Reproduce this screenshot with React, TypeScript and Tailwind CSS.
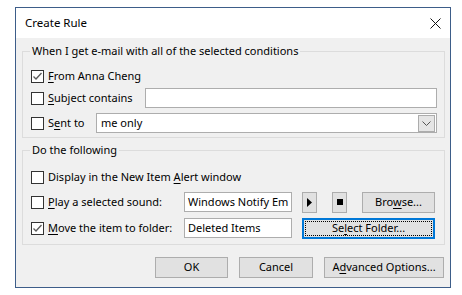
import React from 'react';

const font = { fontFamily: '"Noto Sans", "Open Sans", sans-serif' };

function U({ children }: { children: React.ReactNode }) {
  return <span className="underline decoration-1 underline-offset-[2px]">{children}</span>;
}

function Check({ checked }: { checked?: boolean }) {
  return (
    <span className="flex h-[13px] w-[13px] shrink-0 items-center justify-center border border-[#333333] bg-white">
      {checked && (
        <svg width="11" height="11" viewBox="0 0 11 11">
          <path d="M1.5 5.5 L4 8 L9.5 2" stroke="#5a5a5a" strokeWidth="1.3" fill="none" />
        </svg>
      )}
    </span>
  );
}

function Group({ title, children, className }: { title: string; children: React.ReactNode; className?: string }) {
  return (
    <fieldset className={`ml-[6px] mr-[5px] border border-[#dcdcdc] ${className ?? ''}`}>
      <legend className="ml-[7px] px-[2px] text-[11px] leading-[16px]">{title}</legend>
      {children}
    </fieldset>
  );
}

function Btn({ children, className }: { children: React.ReactNode; className?: string }) {
  return (
    <div className={`flex h-[21px] items-center justify-center border border-[#adadad] bg-[#e1e1e1] text-[11px] ${className ?? ''}`}>
      {children}
    </div>
  );
}

function Field({ children, className }: { children?: React.ReactNode; className?: string }) {
  return (
    <div className={`flex h-[20px] items-center overflow-hidden whitespace-nowrap border border-[#adadad] bg-white pl-[3px] text-[11px] ${className ?? ''}`}>
      {children}
    </div>
  );
}

export default function App() {
  return (
    <div className="h-[295px] w-[462px] bg-white pl-[15px] pt-[7px] text-black" style={font}>
      <div className="flex h-[281px] w-[436px] flex-col border border-[#3d5d89] bg-[#f0f0f0]">
        {/* title bar */}
        <div className="flex h-[30px] shrink-0 items-center justify-between bg-white pl-[9px] pr-[9px]">
          <span className="text-[11.5px]">Create Rule</span>
          <svg width="11" height="11" viewBox="0 0 11 11">
            <path d="M0.5 0.5 L10.5 10.5 M10.5 0.5 L0.5 10.5" stroke="#111" strokeWidth="1" />
          </svg>
        </div>

        <Group title="When I get e-mail with all of the selected conditions" className="mt-[5px] pb-[4px]">
          <div className="flex flex-col pl-[8px] pr-[7px] pt-[7px] text-[11px]">
            <div className="flex h-[20px] items-center gap-[4px]">
              <Check checked />
              <span><U>F</U>rom Anna Cheng</span>
            </div>
            <div className="mt-[2px] flex h-[20px] items-center">
              <div className="flex w-[114px] items-center gap-[4px]">
                <Check />
                <span><U>S</U>ubject contains</span>
              </div>
              <Field className="flex-1" />
            </div>
            <div className="mt-[5px] flex h-[20px] items-center">
              <div className="flex w-[65px] items-center gap-[4px]">
                <Check />
                <span>S<U>e</U>nt to</span>
              </div>
              <div className="flex h-[20px] flex-1 items-center justify-between border border-[#adadad] bg-white pl-[4px] pr-[1px]">
                <span>me only</span>
                <div className="flex h-[17px] w-[17px] items-center justify-center border border-[#acacac] bg-[#e5e5e5]">
                  <svg width="9" height="5" viewBox="0 0 9 5">
                    <path d="M0.5 0.5 L4.5 4.5 L8.5 0.5" stroke="#555" strokeWidth="1" fill="none" />
                  </svg>
                </div>
              </div>
            </div>
          </div>
        </Group>

        <Group title="Do the following" className="mt-[4px] pb-[6px]">
          <div className="flex flex-col pl-[8px] pr-[9px] pt-[9px] text-[11px]">
            <div className="flex h-[20px] items-center gap-[4px]">
              <Check />
              <span>Display in the New Item <U>A</U>lert window</span>
            </div>
            <div className="mt-[5px] flex h-[20px] items-center">
              <div className="flex w-[153px] items-center gap-[4px]">
                <Check />
                <span><U>P</U>lay a selected sound:</span>
              </div>
              <Field className="w-[108px]">Windows Notify Em</Field>
              <Btn className="ml-[10px] h-[19px] w-[15px]">
                <svg width="5" height="9" viewBox="0 0 5 9">
                  <path d="M0 0 L5 4.5 L0 9 Z" fill="#000" />
                </svg>
              </Btn>
              <Btn className="ml-[15px] h-[19px] w-[15px]">
                <span className="block h-[6px] w-[6px] bg-black" />
              </Btn>
              <Btn className="ml-[15px] h-[19px] flex-1">
                <span>Bro<U>w</U>se...</span>
              </Btn>
            </div>
            <div className="mt-[6px] flex h-[20px] items-center">
              <div className="flex w-[153px] items-center gap-[4px]">
                <Check checked />
                <span><U>M</U>ove the item to folder:</span>
              </div>
              <Field className="w-[108px]">Deleted Items</Field>
              <div className="ml-[10px] flex h-[21px] flex-1 items-center border-2 border-[#0078d7] bg-[#e1e1e1] p-[1px]">
                <div className="flex h-full w-full items-center justify-center border border-dotted border-black">
                  <span>Se<U>l</U>ect Folder...</span>
                </div>
              </div>
            </div>
          </div>
        </Group>

        <div className="mr-[6px] mt-[12px] flex justify-end gap-[11px]">
          <Btn className="w-[73px]">OK</Btn>
          <Btn className="w-[74px]">Cancel</Btn>
          <Btn className="w-[120px]">
            <span>A<U>d</U>vanced Options...</span>
          </Btn>
        </div>
      </div>
    </div>
  );
}
